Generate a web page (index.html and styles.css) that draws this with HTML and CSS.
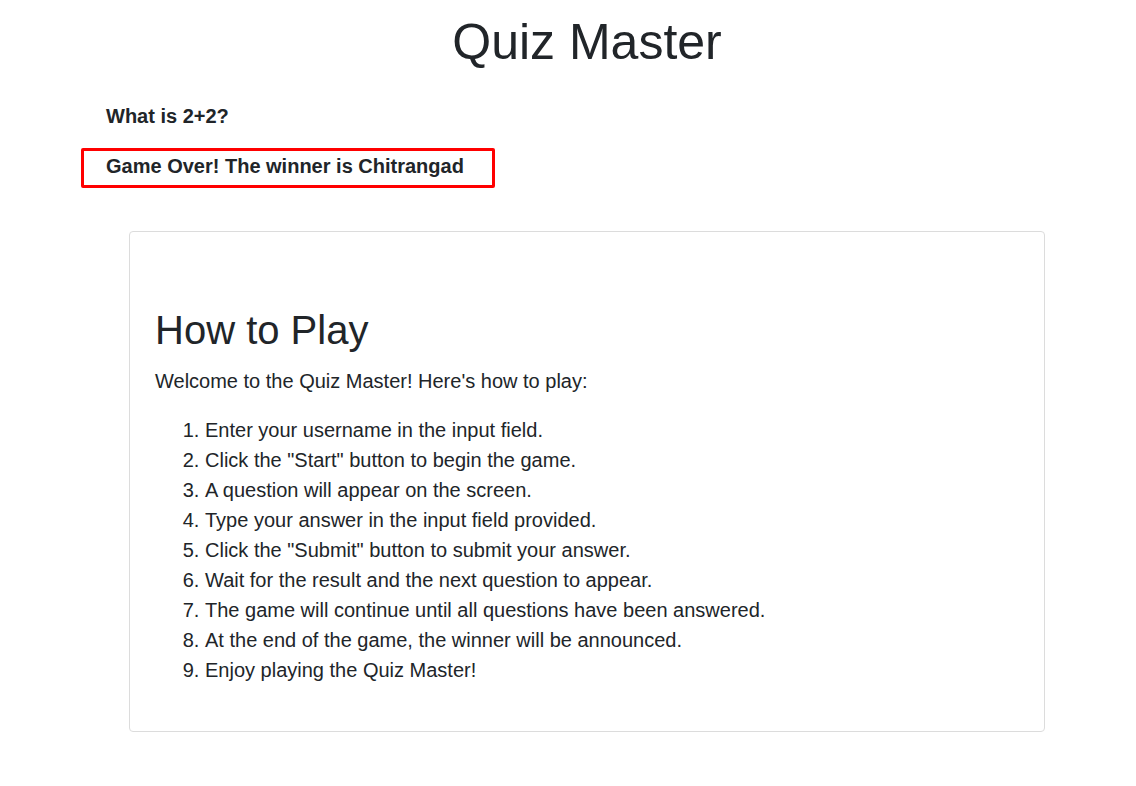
FILE: index.html
```html
<!DOCTYPE html>
<html>
<head>
<meta charset="utf-8">
<link rel="stylesheet" href="styles.css">
</head>
<body>
<div class="page">
  <h1 class="title">Quiz Master</h1>
  <div class="game">
    <p class="question">What is 2+2?</p>
    <div class="result">Game Over! The winner is Chitrangad</div>
  </div>
  <div class="card">
    <h2 class="card-title">How to Play</h2>
    <p class="intro">Welcome to the Quiz Master! Here's how to play:</p>
    <ol class="steps">
      <li>Enter your username in the input field.</li>
      <li>Click the "Start" button to begin the game.</li>
      <li>A question will appear on the screen.</li>
      <li>Type your answer in the input field provided.</li>
      <li>Click the "Submit" button to submit your answer.</li>
      <li>Wait for the result and the next question to appear.</li>
      <li>The game will continue until all questions have been answered.</li>
      <li>At the end of the game, the winner will be announced.</li>
      <li>Enjoy playing the Quiz Master!</li>
    </ol>
  </div>
</div>
</body>
</html>
```
FILE: styles.css
```css
html, body {
  margin: 0;
  padding: 0;
  background: #fff;
}
* {
  box-sizing: border-box;
}
body {
  font-family: "Liberation Sans", Arial, sans-serif;
  color: #212529;
}
.page {
  padding-left: 38px;
  display: flex;
  flex-direction: column;
}
.title {
  margin: 12px 0 0;
  text-align: center;
  font-size: 50px;
  font-weight: 400;
  line-height: 1.2;
}
.game {
  padding-left: 43px;
  margin-top: 32px;
}
.question {
  margin: 0;
  padding-left: 25px;
  font-size: 20px;
  font-weight: 700;
  line-height: 24px;
}
.result {
  width: 414px;
  margin-top: 20px;
  border: 3px solid #ff0000;
  border-radius: 2px;
  padding: 4px 0 8px 22px;
  font-size: 20px;
  font-weight: 700;
  line-height: 22px;
}
.card {
  align-self: center;
  width: 916px;
  margin-top: 43px;
  border: 1px solid #dcdcdc;
  border-radius: 4px;
  padding: 74px 25px 46px;
}
.card-title {
  margin: 0 0 12px;
  font-size: 40px;
  font-weight: 400;
  line-height: 48px;
}
.intro {
  margin: 0 0 19px;
  font-size: 20px;
  line-height: 30px;
}
.steps {
  margin: 0;
  padding-left: 50px;
  font-size: 20px;
  line-height: 30px;
}
```
